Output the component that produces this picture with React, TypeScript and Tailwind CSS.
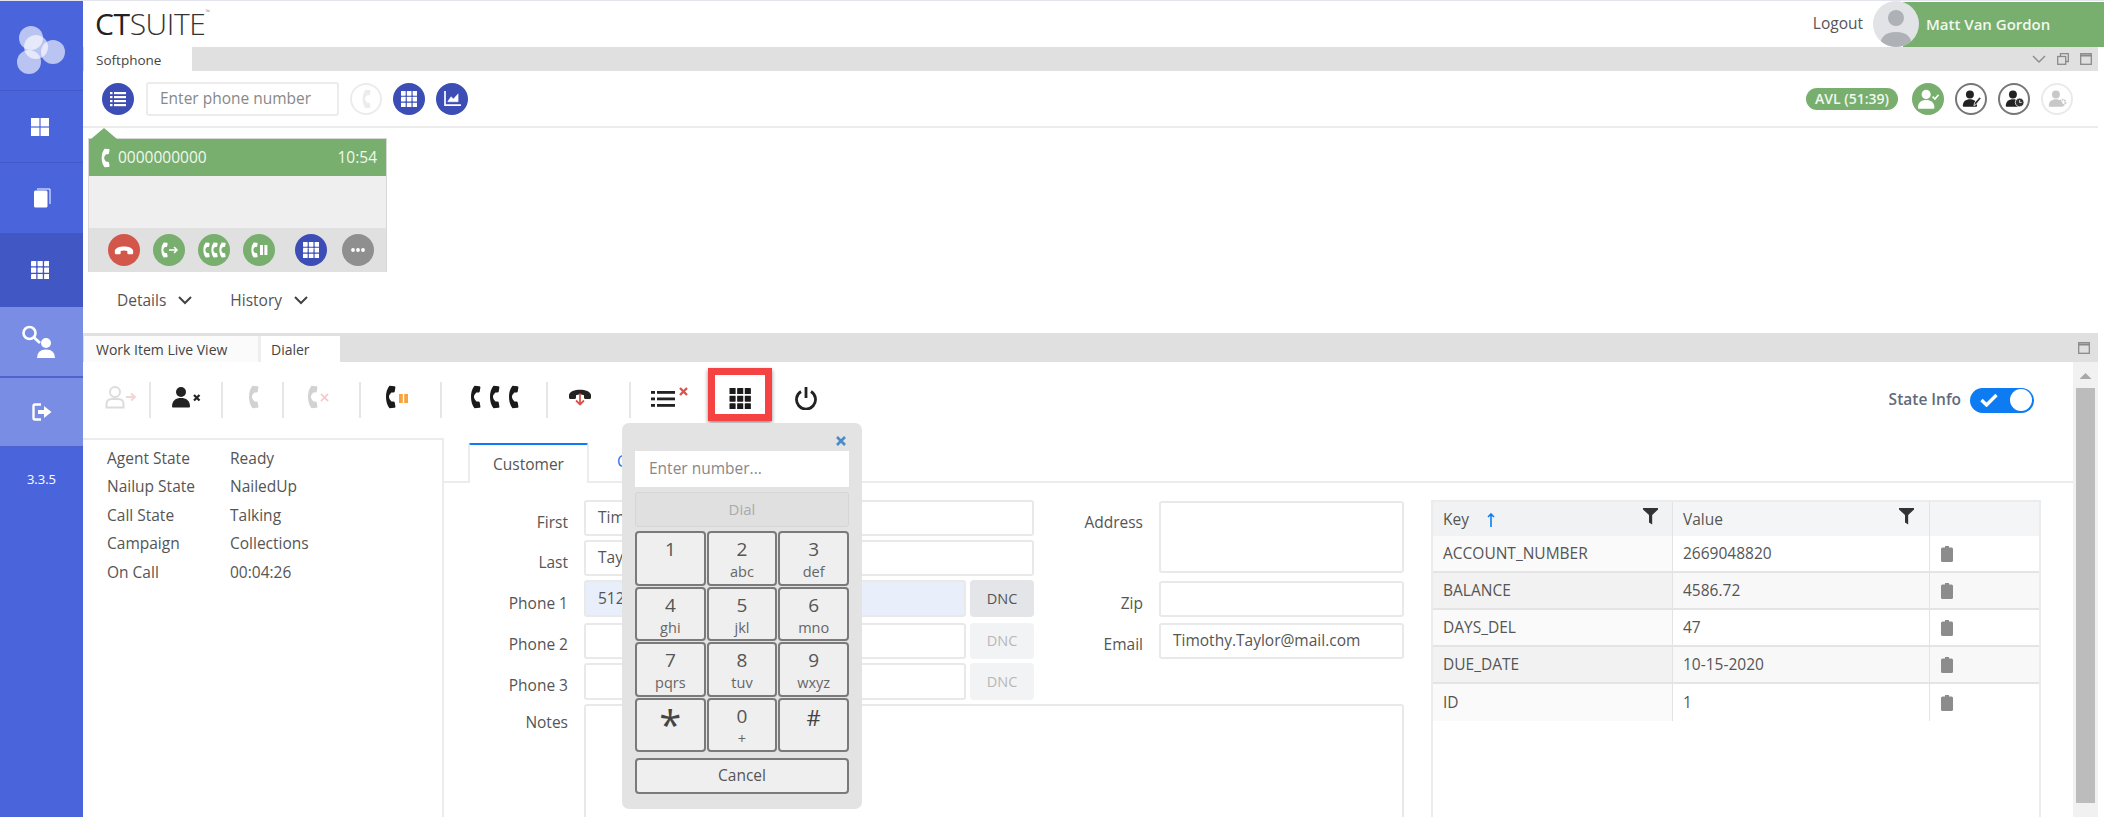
import React from "react";

const Handset = ({ className = "" }: { className?: string }) => (
  <svg viewBox="0 0 12 24" className={className} fill="currentColor">
    <path d="M5.5 .8 L10.5 1.2 Q11.6 1.4 11.4 2.6 L10.8 6.2 Q10.6 7.4 9.4 7.4 L7.4 7.6 Q2.5 12 7.4 16.4 L9.4 16.6 Q10.6 16.6 10.8 17.8 L11.4 21.4 Q11.6 22.6 10.5 22.8 L5.5 23.2 Q2 19 2 12 Q2 5 5.5 .8 Z" />
  </svg>
);

const Hangup = ({ className = "" }: { className?: string }) => (
  <svg viewBox="0 0 24 14" className={className} fill="currentColor">
    <path d="M1 8 C2 1 22 1 23 8 L23 10.5 Q23 12 21.5 12 L17.5 12 Q16 12 16 10.5 L16 8.3 C14 7.2 10 7.2 8 8.3 L8 10.5 Q8 12 6.5 12 L2.5 12 Q1 12 1 10.5 Z" />
  </svg>
);

const Grid3 = ({ className = "" }: { className?: string }) => (
  <svg viewBox="0 0 22 22" className={className} fill="currentColor">
    {[0, 8, 16].flatMap((y) =>
      [0, 8, 16].map((x) => <rect key={`${x}-${y}`} x={x} y={y} width="6.4" height="6.4" rx=".5" />)
    )}
  </svg>
);

const Person = ({ fill = "currentColor" }: { fill?: string }) => (
  <g fill={fill}>
    <circle cx="10" cy="7" r="5" />
    <path d="M1 21.5 C1 15.5 5 13 10 13 C15 13 19 15.5 19 21.5 Q19 22.5 18 22.5 L2 22.5 Q1 22.5 1 21.5 Z" />
  </g>
);

const Circle = ({ className, children }: { className: string; children?: React.ReactNode }) => (
  <div className={`flex h-[32px] w-[32px] shrink-0 items-center justify-center rounded-full ${className}`}>{children}</div>
);

const Field = ({
  label,
  value = "",
  className = "",
  labelClass = "pt-[12px]",
  inputClass = "h-[36px]",
  labelWidth = "w-[124px]",
  bg = "bg-white",
}: {
  label: string;
  value?: string;
  className?: string;
  labelClass?: string;
  inputClass?: string;
  labelWidth?: string;
  bg?: string;
}) => (
  <div className={`flex gap-[16px] ${className}`}>
    <div className={`${labelWidth} shrink-0 text-right text-[15.5px] leading-[20px] text-[#555] ${labelClass}`}>{label}</div>
    <div
      className={`${inputClass} ${bg} flex min-w-0 flex-1 items-center overflow-hidden rounded-[3px] border-2 border-[#e9e9e9] pl-[12px] text-[15.5px] whitespace-nowrap text-[#555]`}
    >
      {value}
    </div>
  </div>
);

const keys: [string, string][] = [
  ["1", ""],
  ["2", "abc"],
  ["3", "def"],
  ["4", "ghi"],
  ["5", "jkl"],
  ["6", "mno"],
  ["7", "pqrs"],
  ["8", "tuv"],
  ["9", "wxyz"],
  ["*", ""],
  ["0", "+"],
  ["#", ""],
];

const rows = [
  ["ACCOUNT_NUMBER", "2669048820"],
  ["BALANCE", "4586.72"],
  ["DAYS_DEL", "47"],
  ["DUE_DATE", "10-15-2020"],
  ["ID", "1"],
];

const Filter = () => (
  <svg viewBox="0 0 16 18" className="h-[17px] w-[15px] text-[#333]" fill="currentColor">
    <path d="M0 0 H16 V1.5 L9.8 7.5 V17.5 L6.4 15.5 V7.5 L0 1.5 Z" />
  </svg>
);

const Clip = () => (
  <svg viewBox="0 0 12 16" className="h-[16px] w-[12px] text-[#8c8c8c]" fill="currentColor">
    <path d="M4 0 H8 V1.5 H10.5 Q12 1.5 12 3 V14.5 Q12 16 10.5 16 H1.5 Q0 16 0 14.5 V3 Q0 1.5 1.5 1.5 H4 Z" />
  </svg>
);

export default function App() {
  return (
    <div className="relative flex h-[817px] w-[2104px] overflow-hidden border-t border-[#e4e4ee] bg-white font-['Open_Sans',sans-serif]">
      {/* Sidebar */}
      <aside className="flex w-[83px] shrink-0 flex-col bg-[#4a64dc] text-white">
        <div className="flex h-[90px] items-center justify-center border-b border-[#415ac8]">
          <svg viewBox="0 0 83 90" className="h-[90px] w-[83px]">
            <g fill="#fff" fillOpacity=".62">
              <circle cx="31" cy="37" r="12" />
              <circle cx="36" cy="46" r="12" />
              <circle cx="53" cy="51" r="12" />
              <circle cx="29" cy="61" r="12" />
            </g>
          </svg>
        </div>
        <div className="flex h-[72px] items-center justify-center border-b border-[#415ac8] pr-[3px]">
          <svg viewBox="0 0 18 18" className="h-[18px] w-[18px]" fill="#fff">
            <rect width="8.4" height="8.4" />
            <rect x="9.6" width="8.4" height="8.4" />
            <rect y="9.6" width="8.4" height="8.4" />
            <rect x="9.6" y="9.6" width="8.4" height="8.4" />
          </svg>
        </div>
        <div className="flex h-[70px] items-center justify-center">
          <svg viewBox="0 0 18 20" className="h-[20px] w-[18px]">
            <path d="M4 1 H17 V16" fill="none" stroke="#fff" strokeWidth="1" />
            <rect x="1" y="2.5" width="13.5" height="17" rx="1.5" fill="#fff" />
          </svg>
        </div>
        <div className="flex h-[74px] items-center justify-center bg-[#4157c4] pr-[3px]">
          <Grid3 className="h-[18px] w-[18px] text-white" />
        </div>
        <div className="flex h-[71px] items-center justify-center border-b-2 border-[#4f63cf] bg-[#7a8de4] pr-[5px]">
          <svg viewBox="0 0 36 34" className="h-[34px] w-[36px]">
            <circle cx="8.5" cy="8" r="6" fill="none" stroke="#fff" strokeWidth="2.6" />
            <path d="M13 12.5 L19 18" stroke="#fff" strokeWidth="2.8" />
            <circle cx="25" cy="18" r="5" fill="#fff" />
            <path d="M16 33 Q16 24.5 25 24.5 Q34 24.5 34 33 Z" fill="#fff" />
          </svg>
        </div>
        <div className="flex h-[70px] items-center justify-center border-b-2 border-[#4f63cf] bg-[#7a8de4]">
          <svg viewBox="0 0 20 18" className="h-[18px] w-[20px]">
            <path d="M9 1.5 H3 Q1.5 1.5 1.5 3 V15 Q1.5 16.5 3 16.5 H9" fill="none" stroke="#fff" strokeWidth="2.4" />
            <path d="M6 7 H12 V3 L19.5 9 L12 15 V11 H6 Z" fill="#fff" />
          </svg>
        </div>
        <div className="pt-[22px] text-center text-[13px] leading-[18px] text-white">3.3.5</div>
      </aside>

      {/* Main */}
      <main className="flex min-w-0 flex-1 flex-col">
        {/* Header */}
        <header className="flex h-[46px] shrink-0 items-center justify-between">
          <div className="ml-[12px] flex items-start text-[30px] leading-[36px] font-light tracking-[-0.4px] text-[#333]">
            <span className="font-normal text-[#222]">CT</span>
            <span>SUITE</span>
            <span className="mt-[3px] text-[6px] leading-[6px] text-[#666]">™</span>
          </div>
          <div className="flex items-center">
            <span className="mr-[10px] text-[15.5px] text-[#555]">Logout</span>
            <div className="relative z-10 -mr-[16px] h-[46px] w-[46px] overflow-hidden rounded-full bg-[#e1e3e6]">
              <svg viewBox="0 0 46 46" className="h-[46px] w-[46px]" fill="#aeb1b5">
                <circle cx="23" cy="17" r="8" />
                <path d="M7 46 Q7 31 23 31 Q39 31 39 46 Z" />
              </svg>
            </div>
            <div className="flex h-[45px] w-[201px] items-center bg-[#78ae6e] pl-[23px] text-[15px] font-semibold text-[#f1f8ee]">
              Matt Van Gordon
            </div>
          </div>
        </header>

        {/* Softphone tab bar */}
        <div className="mr-[6px] flex h-[24px] shrink-0 items-stretch justify-between bg-[#e0e0e0] pl-px">
          <div className="flex w-[108px] items-center bg-white pl-[12px] pt-[3px] text-[13.5px] text-[#444]">Softphone</div>
          <div className="flex items-center gap-[11px] pr-[6px] text-[#8a8a8a]">
            <svg viewBox="0 0 14 8" className="h-[8px] w-[14px]" fill="none" stroke="currentColor" strokeWidth="1.4">
              <path d="M1 1 L7 7 L13 1" />
            </svg>
            <svg viewBox="0 0 12 12" className="h-[12px] w-[12px]" fill="none" stroke="currentColor" strokeWidth="1.3">
              <rect x=".7" y="3.5" width="8" height="7.8" />
              <path d="M3.5 3.5 V.7 H11.3 V8.5 H8.7" />
            </svg>
            <svg viewBox="0 0 12 12" className="h-[12px] w-[12px]" fill="none" stroke="currentColor" strokeWidth="1.3">
              <rect x=".7" y=".7" width="10.6" height="10.6" />
              <path d="M.7 2.5 H11.3" strokeWidth="2" />
            </svg>
          </div>
        </div>

        {/* Softphone toolbar */}
        <div className="mr-[6px] flex h-[57px] shrink-0 items-center gap-[11px] border-b-2 border-[#ececec] pl-[19px] pr-[25px]">
          <Circle className="bg-[#3c4db5]">
            <svg viewBox="0 0 16 16" className="h-[16px] w-[16px]" fill="#fff">
              <rect x="0" y="1" width="2.5" height="2.2" />
              <rect x="4" y="1" width="12" height="2.2" />
              <rect x="0" y="5" width="2.5" height="2.2" />
              <rect x="4" y="5" width="12" height="2.2" />
              <rect x="0" y="9" width="2.5" height="2.2" />
              <rect x="4" y="9" width="12" height="2.2" />
              <rect x="0" y="13" width="2.5" height="2.2" />
              <rect x="4" y="13" width="12" height="2.2" />
            </svg>
          </Circle>
          <div className="ml-px flex h-[34px] w-[193px] items-center rounded-[3px] border-2 border-[#ececec] pl-[12px] text-[15.5px] whitespace-nowrap text-[#888]">
            Enter phone number
          </div>
          <Circle className="border-2 border-[#ececec] bg-white">
            <Handset className="h-[20px] w-[10px] text-[#ececec]" />
          </Circle>
          <Circle className="bg-[#3c4db5]">
            <Grid3 className="h-[16px] w-[16px] text-white" />
          </Circle>
          <Circle className="bg-[#3c4db5]">
            <svg viewBox="0 0 18 16" className="h-[15px] w-[17px]" fill="none" stroke="#fff">
              <path d="M1 0 V15 H18" strokeWidth="1.8" />
              <path d="M4 11 L7.5 6 L10 8.5 L15 3 V11.5 H4 Z" fill="#fff" strokeWidth="0.5" />
            </svg>
          </Circle>
          <div className="ml-auto flex h-[22px] w-[92px] items-center justify-center rounded-full bg-[#78ae6e] text-[14px] font-semibold text-[#f1f8ee]">
            AVL (51:39)
          </div>
          <Circle className="ml-[3px] bg-[#78ae6e]">
            <svg viewBox="0 0 24 24" className="h-[22px] w-[22px]">
              <Person fill="#fff" />
              <path d="M17 9.5 L19.5 12 L23.5 7.5" fill="none" stroke="#fff" strokeWidth="1.8" />
            </svg>
          </Circle>
          <Circle className="border-2 border-[#777] bg-white">
            <svg viewBox="0 0 24 24" className="h-[19px] w-[19px]">
              <Person fill="#222" />
              <path d="M15 21 L16 17 L22 10 L24 12 L18 19.5 Z" fill="#333" stroke="#fff" />
            </svg>
          </Circle>
          <Circle className="border-2 border-[#777] bg-white">
            <svg viewBox="0 0 24 24" className="h-[19px] w-[19px]">
              <Person fill="#222" />
              <circle cx="18.5" cy="17" r="5.5" fill="#333" stroke="#fff" />
              <path d="M18.5 14 V17 H21" stroke="#fff" fill="none" />
            </svg>
          </Circle>
          <Circle className="border-2 border-[#eaeaea] bg-white">
            <svg viewBox="0 0 24 24" className="h-[19px] w-[19px]">
              <Person fill="#c8c8c8" />
              <circle cx="18.5" cy="17" r="3.5" fill="none" stroke="#c8c8c8" strokeWidth="2.4" strokeDasharray="2 1" />
            </svg>
          </Circle>
        </div>

        {/* Softphone body */}
        <div className="h-[205px] shrink-0 pl-[5px] pt-[10px]">
          <div className="relative h-[134px] w-[299px] border border-[#d8d8d8] bg-[#efefef]">
            <div className="absolute -top-[11px] left-[2px] h-[11px] w-[26px] bg-[#78ae6e] [clip-path:polygon(50%_0,100%_100%,0_100%)]" />
            <div className="flex h-[37px] items-center justify-between bg-[#78ae6e] pl-[11px] pr-[9px] text-[#f1f8ee]">
              <div className="flex items-center gap-[8px] text-[15.5px]">
                <Handset className="h-[20px] w-[10px] text-white" />
                0000000000
              </div>
              <span className="text-[15.5px]">10:54</span>
            </div>
            <div className="h-[52px]" />
            <div className="flex h-[44px] items-center bg-[#e0e0e0] pl-[19px]">
              <Circle className="bg-[#d2574a]">
                <Hangup className="h-[12px] w-[20px] text-white" />
              </Circle>
              <Circle className="ml-[13px] bg-[#78ae6e]">
                <Handset className="h-[16px] w-[8px] text-white" />
                <svg viewBox="0 0 10 10" className="ml-px h-[10px] w-[10px]" fill="none" stroke="#fff" strokeWidth="1.6">
                  <path d="M0 5 H8 M5 2 L8 5 L5 8" />
                </svg>
              </Circle>
              <Circle className="ml-[13px] bg-[#78ae6e]">
                <Handset className="h-[16px] w-[8px] text-white" />
                <Handset className="h-[16px] w-[8px] text-white" />
                <Handset className="h-[16px] w-[8px] text-white" />
              </Circle>
              <Circle className="ml-[13px] bg-[#78ae6e]">
                <Handset className="h-[16px] w-[8px] text-white" />
                <svg viewBox="0 0 8 10" className="ml-[2px] h-[10px] w-[8px]" fill="#fff">
                  <rect width="3" height="10" />
                  <rect x="4.4" width="3" height="10" />
                </svg>
              </Circle>
              <Circle className="ml-[20px] bg-[#3c4db5]">
                <Grid3 className="h-[16px] w-[16px] text-white" />
              </Circle>
              <Circle className="ml-[15px] bg-[#8f8f8f]">
                <svg viewBox="0 0 14 4" className="h-[4px] w-[14px]" fill="#fff">
                  <circle cx="2" cy="2" r="1.9" />
                  <circle cx="7" cy="2" r="1.9" />
                  <circle cx="12" cy="2" r="1.9" />
                </svg>
              </Circle>
            </div>
          </div>
          <div className="mt-[17px] flex items-center pl-[29px] text-[15.5px] text-[#555]">
            <span>Details</span>
            <svg viewBox="0 0 14 9" className="ml-[12px] h-[9px] w-[14px]" fill="none" stroke="#444" strokeWidth="2">
              <path d="M1 1 L7 7 L13 1" />
            </svg>
            <span className="ml-[38px]">History</span>
            <svg viewBox="0 0 14 9" className="ml-[12px] h-[9px] w-[14px]" fill="none" stroke="#444" strokeWidth="2">
              <path d="M1 1 L7 7 L13 1" />
            </svg>
          </div>
        </div>

        {/* Dialer tab bar */}
        <div className="mr-[6px] flex h-[29px] shrink-0 items-end justify-between bg-[#e0e0e0] pl-px">
          <div className="flex gap-[3px] bg-[#eeeeee]">
            <div className="flex h-[26px] w-[174px] items-center bg-[#fbfbfb] pl-[12px] text-[14px] whitespace-nowrap text-[#444]">
              Work Item Live View
            </div>
            <div className="flex h-[26px] w-[79px] items-center bg-white pl-[10px] text-[14px] text-[#444]">Dialer</div>
          </div>
          <div className="flex h-full items-center pr-[8px]">
            <svg viewBox="0 0 12 12" className="h-[12px] w-[12px] text-[#8a8a8a]" fill="none" stroke="currentColor" strokeWidth="1.3">
              <rect x=".7" y=".7" width="10.6" height="10.6" />
              <path d="M.7 2.5 H11.3" strokeWidth="2" />
            </svg>
          </div>
        </div>

        {/* Dialer area */}
        <div className="mr-[6px] flex min-h-0 flex-1">
          <div className="flex min-w-0 flex-1 flex-col">
            {/* Toolbar */}
            <div className="flex h-[76px] shrink-0 items-start pt-[20px]">
              <div className="flex h-[36px] w-[68px] items-center justify-center border-r-2 border-[#e6e6e6] pb-[6px] pl-[9px]">
                <svg viewBox="0 0 32 24" className="h-[24px] w-[32px]">
                  <circle cx="10" cy="7" r="5" fill="none" stroke="#dcdcdc" strokeWidth="2" />
                  <path d="M1.5 22.5 V19 Q1.5 14 7 14 H13 Q18.5 14 18.5 19 V22.5 Z" fill="none" stroke="#dcdcdc" strokeWidth="2" />
                  <path d="M21 12 H29 M26 8.5 L30 12 L26 15.5" fill="none" stroke="#f2d5d5" strokeWidth="2" />
                </svg>
              </div>
              <div className="flex h-[36px] w-[72px] items-center justify-center border-r-2 border-[#e6e6e6] pb-[6px]">
                <svg viewBox="0 0 30 24" className="h-[24px] w-[30px]">
                  <Person fill="#222" />
                  <path d="M23 10 L28.5 15.5 M28.5 10 L23 15.5" stroke="#222" strokeWidth="2.2" />
                </svg>
              </div>
              <div className="flex h-[36px] w-[61px] items-center justify-center border-r-2 border-[#e6e6e6] pb-[6px]">
                <Handset className="h-[24px] w-[12px] text-[#d2d2d2]" />
              </div>
              <div className="flex h-[36px] w-[77px] items-center justify-center gap-[2px] border-r-2 border-[#e6e6e6] pb-[6px] pr-[9px]">
                <Handset className="h-[24px] w-[12px] text-[#d2d2d2]" />
                <svg viewBox="0 0 10 10" className="mt-px h-[9px] w-[9px]" fill="none" stroke="#f2cccc" strokeWidth="1.8">
                  <path d="M1 1 L9 9 M9 1 L1 9" />
                </svg>
              </div>
              <div className="flex h-[36px] w-[81px] items-center justify-center gap-[3px] border-r-2 border-[#e6e6e6] pb-[6px] pr-[10px]">
                <Handset className="h-[24px] w-[12px] text-[#1a1a1a]" />
                <svg viewBox="0 0 9 9" className="mt-[2px] h-[9px] w-[9px]" fill="#f9a33c">
                  <rect width="3.8" height="9" />
                  <rect x="5.2" width="3.8" height="9" />
                </svg>
              </div>
              <div className="flex h-[36px] w-[106px] items-center justify-center gap-[7px] border-r-2 border-[#e6e6e6] pb-[6px]">
                <Handset className="h-[24px] w-[12px] text-[#1a1a1a]" />
                <Handset className="h-[24px] w-[12px] text-[#1a1a1a]" />
                <Handset className="h-[24px] w-[12px] text-[#1a1a1a]" />
              </div>
              <div className="flex h-[36px] w-[83px] flex-col items-center justify-center border-r-2 border-[#e6e6e6] pb-[6px] pr-[18px]">
                <div className="relative h-[20px] w-[24px]">
                  <Hangup className="h-[14px] w-[24px] text-[#222]" />
                  <svg viewBox="0 0 10 12" className="absolute left-[7px] top-[6px] h-[13px] w-[10px]" fill="none" stroke="#d9534f" strokeWidth="1.8">
                    <path d="M5 0 V11 M1 7 L5 11 L9 7" />
                  </svg>
                </div>
              </div>
              <div className="flex h-[36px] w-[77px] items-center justify-center pb-[6px] pl-[1px]">
                <svg viewBox="0 0 38 20" className="h-[20px] w-[38px]">
                  <g fill="#222">
                    <rect y="4" width="4" height="2.8" />
                    <rect x="6" y="4" width="18" height="2.8" />
                    <rect y="10.5" width="4" height="2.8" />
                    <rect x="6" y="10.5" width="18" height="2.8" />
                    <rect y="17" width="4" height="2.8" />
                    <rect x="6" y="17" width="18" height="2.8" />
                  </g>
                  <path d="M29 1 L36 8 M36 1 L29 8" stroke="#d9534f" strokeWidth="2.4" />
                </svg>
              </div>
              <div className="relative flex h-[36px] w-[64px] items-center justify-center pb-[4px]">
                <Grid3 className="h-[21px] w-[22px] text-[#1a1a1a]" />
                <div className="absolute -top-[14px] left-0 h-[53px] w-[64px] border-[7px] border-[#f54343] shadow-[0_2px_4px_rgba(0,0,0,.45)]" />
              </div>
              <div className="flex h-[36px] w-[68px] items-center justify-center pb-[5px]">
                <svg viewBox="0 0 24 24" className="h-[24px] w-[24px]" fill="none" stroke="#222" strokeWidth="2.8">
                  <path d="M7 5.5 A9.5 9.5 0 1 0 17 5.5" />
                  <path d="M12 1 V12" />
                </svg>
              </div>
              <div className="ml-auto flex h-[36px] items-center gap-[9px] pr-[39px]">
                <span className="text-[15.5px] font-semibold text-[#5f6b7a]">State Info</span>
                <div className="flex h-[25px] w-[64px] items-center justify-between rounded-full bg-[#0d7cf2] pl-[10px] pr-[2px]">
                  <svg viewBox="0 0 18 14" className="h-[14px] w-[18px]" fill="none" stroke="#fff" strokeWidth="3.4">
                    <path d="M1.5 7 L6.5 12 L16.5 2" />
                  </svg>
                  <div className="h-[22px] w-[22px] rounded-full bg-white" />
                </div>
              </div>
            </div>

            {/* Lower */}
            <div className="flex min-h-0 flex-1">
              <div className="w-[361px] shrink-0 border-r-2 border-t-2 border-[#ececec] pl-[24px] pt-[4px]">
                {[
                  ["Agent State", "Ready"],
                  ["Nailup State", "NailedUp"],
                  ["Call State", "Talking"],
                  ["Campaign", "Collections"],
                  ["On Call", "00:04:26"],
                ].map(([k, v]) => (
                  <div key={k} className="flex h-[28.5px] items-center text-[15.5px] text-[#555]">
                    <span className="w-[123px]">{k}</span>
                    <span>{v}</span>
                  </div>
                ))}
              </div>
              <div className="flex min-w-0 flex-1 flex-col">
                {/* Tabs */}
                <div className="flex h-[45px] shrink-0 items-end border-b-2 border-[#ececec] pl-[24px]">
                  <div className="-mb-[2px] flex h-[40px] w-[121px] items-center justify-center rounded-t-[3px] border-x-2 border-t-2 border-[#ececec] border-t-[#0d7cf2] bg-white pt-[2px] text-[15.5px] text-[#555]">
                    Customer
                  </div>
                  <div className="flex h-[38px] items-center pl-[28px] text-[15.5px] text-[#0d7cf2]">Campaign</div>
                </div>
                <div className="flex min-h-0 flex-1 pt-[17px]">
                  {/* Form */}
                  <div className="flex w-[960px] shrink-0 flex-col">
                    <div className="flex">
                      <div className="flex w-[590px] shrink-0 flex-col">
                        <Field label="First" value="Timothy" />
                        <Field label="Last" value="Taylor" className="mt-[4px]" />
                        <div className="mt-[4px] flex gap-[4px]">
                          <Field label="Phone 1" value="5125550142" className="min-w-0 flex-1" inputClass="h-[37px]" labelClass="pt-[13px]" bg="bg-[#e8effb]" />
                          <div className="flex h-[37px] w-[64px] shrink-0 items-center justify-center rounded-[4px] bg-[#e3e5e8] text-[14.5px] text-[#555]">DNC</div>
                        </div>
                        <div className="mt-[6px] flex gap-[4px]">
                          <Field label="Phone 2" className="min-w-0 flex-1" labelClass="pt-[11px]" />
                          <div className="flex h-[36px] w-[64px] shrink-0 items-center justify-center rounded-[4px] bg-[#f2f3f5] text-[14.5px] text-[#b8b8b8]">DNC</div>
                        </div>
                        <div className="mt-[4px] flex gap-[4px]">
                          <Field label="Phone 3" className="min-w-0 flex-1" inputClass="h-[37px]" labelClass="pt-[12px]" />
                          <div className="flex h-[37px] w-[64px] shrink-0 items-center justify-center rounded-[4px] bg-[#f2f3f5] text-[14.5px] text-[#b8b8b8]">DNC</div>
                        </div>
                      </div>
                      <div className="flex min-w-0 flex-1 flex-col pt-px">
                        <Field label="Address" labelWidth="w-[109px]" inputClass="h-[72px]" labelClass="pt-[11px]" />
                        <Field label="Zip" labelWidth="w-[109px]" inputClass="h-[36px]" labelClass="pt-[12px]" className="mt-[8px]" />
                        <Field label="Email" labelWidth="w-[109px]" value="Timothy.Taylor@mail.com" labelClass="pt-[11px]" className="mt-[6px]" />
                      </div>
                    </div>
                    <Field label="Notes" className="mt-[4px] min-h-0 flex-1" labelClass="pt-[8px]" inputClass="h-[130px]" />
                  </div>
                  {/* Table */}
                  <div className="ml-[27px] h-[320px] w-[610px] shrink-0 border-2 border-b-0 border-[#ececec] text-[15.5px] text-[#555]">
                    <div className="flex h-[34px] bg-[#f4f5f7]">
                      <div className="flex w-[240px] shrink-0 items-start justify-between border-r border-[#e3e3e3] bg-[#f1f2f4] pl-[10px] pr-[14px] pt-[6px]">
                        <div className="flex items-center">
                          Key
                          <svg viewBox="0 0 8 14" className="ml-[18px] h-[14px] w-[8px]" fill="none" stroke="#0d7cf2" strokeWidth="1.6">
                            <path d="M4 14 V1 M1 4 L4 1 L7 4" />
                          </svg>
                        </div>
                        <Filter />
                      </div>
                      <div className="flex w-[257px] shrink-0 items-start justify-between border-r border-[#e3e3e3] pl-[10px] pr-[15px] pt-[6px]">
                        Value
                        <Filter />
                      </div>
                    </div>
                    {rows.map(([k, v], i) => (
                      <div key={k} className={`flex h-[37px] ${i % 2 ? "bg-[#f8f8f8]" : "bg-white"} ${i < 4 ? "border-b-2 border-[#e4e4e4]" : ""}`}>
                        <div className={`flex w-[240px] shrink-0 items-center border-r border-[#e3e3e3] pl-[10px] ${i % 2 ? "bg-[#f2f2f2]" : "bg-[#fafafa]"}`}>
                          {k}
                        </div>
                        <div className="flex w-[257px] shrink-0 items-center border-r border-[#e3e3e3] pl-[10px]">{v}</div>
                        <div className="flex items-center pl-[11px]">
                          <Clip />
                        </div>
                      </div>
                    ))}
                  </div>
                </div>
              </div>
            </div>
          </div>

          {/* Scrollbar */}
          <div className="flex w-[25px] shrink-0 flex-col bg-[#f1f1f1] px-[3px]">
            <div className="flex h-[26px] items-center justify-center pt-[2px]">
              <div className="h-[6px] w-[12px] bg-[#a8a8a8] [clip-path:polygon(50%_0,100%_100%,0_100%)]" />
            </div>
            <div className="h-[415px] bg-[#bcbcbc]" />
          </div>
        </div>
      </main>

      {/* Dial pad popup */}
      <div className="absolute left-[622px] top-[422px] flex h-[386px] w-[240px] flex-col rounded-[7px] bg-[#e3e3e3] px-[13px] pt-[8px]">
        <div className="flex h-[20px] items-center justify-end pr-[3px]">
          <svg viewBox="0 0 10 10" className="h-[10px] w-[10px]" fill="none" stroke="#4a8cc7" strokeWidth="2.6">
            <path d="M1 1 L9 9 M9 1 L1 9" />
          </svg>
        </div>
        <div className="flex h-[36px] items-center bg-white pl-[14px] text-[15.5px] text-[#888]">Enter number...</div>
        <div className="mt-[5px] flex h-[35px] items-center justify-center rounded-[3px] border border-[#d6d6d6] bg-[#e0e0e0] text-[15px] text-[#aaa]">
          Dial
        </div>
        <div className="mt-[4px] grid grid-cols-3 gap-[1px]">
          {keys.map(([d, s]) => (
            <div key={d} className="flex h-[54.5px] flex-col items-center rounded-[4px] border-2 border-[#7a7a7a] bg-[#efefef] pt-[3px] text-[#555]">
              {d === "*" ? (
                <span className="mt-[4px] text-[40px] leading-[36px] font-medium text-[#444]">*</span>
              ) : (
                <span className={`text-[19px] leading-[26px] ${d === "#" ? "mt-px text-[22px] text-[#444]" : ""}`}>{d}</span>
              )}
              {s && <span className="text-[14.5px] leading-[19px] text-[#666]">{s}</span>}
            </div>
          ))}
        </div>
        <div className="mt-[6px] flex h-[36px] items-center justify-center rounded-[4px] border-2 border-[#7a7a7a] bg-[#efefef] text-[15.5px] text-[#555]">
          Cancel
        </div>
      </div>
    </div>
  );
}
